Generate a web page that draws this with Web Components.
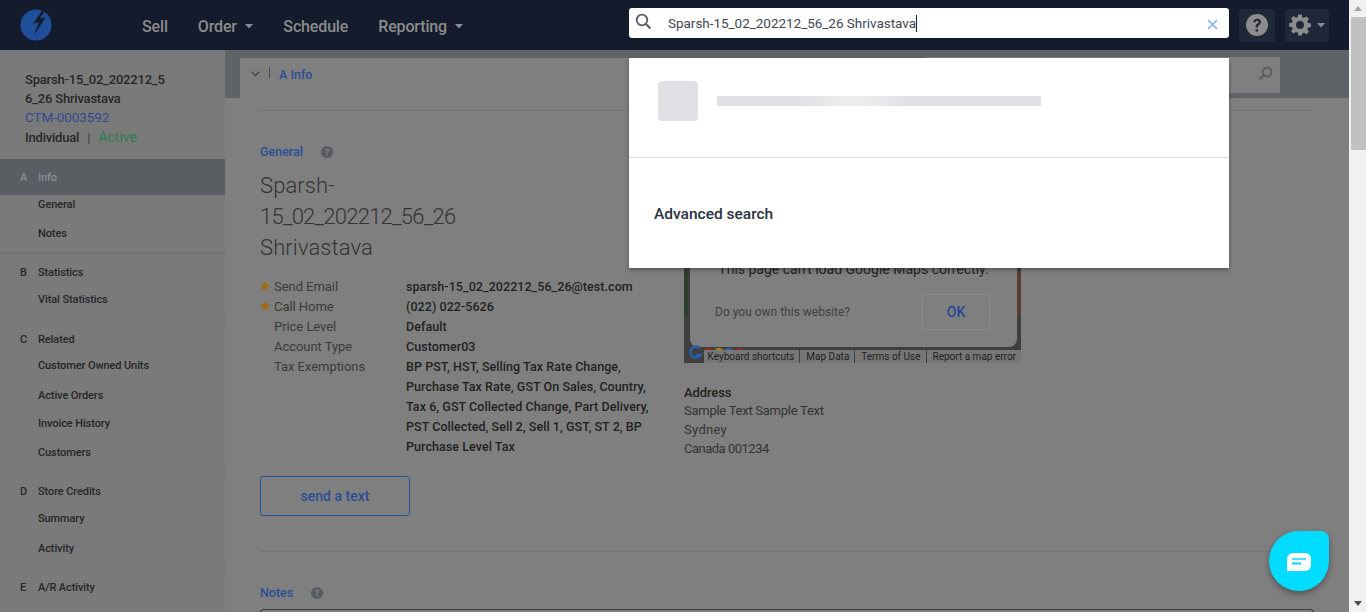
<!DOCTYPE html>
<html lang="en">
<head>
<meta charset="utf-8">
<title>Customer</title>
<style>
  html, body { margin: 0; height: 100%; overflow: hidden; background: #7f7f7f; }
  body { font-family: Roboto, "Liberation Sans", sans-serif; display: flex; }
  .page { flex: none; width: 1349px; height: 612px; display: flex; flex-direction: column; overflow: hidden; position: relative; }
  .body-row { flex: 1; min-height: 0; display: flex; }
</style>
</head>
<body>
<div class="page">
  <app-header></app-header>
  <div class="body-row">
    <side-nav></side-nav>
    <customer-main></customer-main>
  </div>
  <search-panel></search-panel>
  <chat-launcher></chat-launcher>
</div>
<page-scrollbar></page-scrollbar>

<script>
(function () {
  'use strict';

  function define(name, css, html, setup) {
    customElements.define(name, class extends HTMLElement {
      constructor() {
        super();
        const root = this.attachShadow({ mode: 'open' });
        root.innerHTML = '<style>' + css + '</style>' + html;
        if (setup) setup(root, this);
      }
    });
  }

  const caret = '<svg width="8" height="5" viewBox="0 0 8 5"><path d="M0 0h8L4 4.6z" fill="currentColor"/></svg>';

  define('app-header', `
    :host { display: flex; flex: none; height: 50px; background: #131b2c; align-items: center; color: #8c8c8c; }
    .logo { margin-left: 20px; width: 32px; height: 32px; flex: none; overflow: visible; }
    nav { display: flex; margin-left: 90px; padding-top: 3px; font-size: 16px; font-weight: 500; letter-spacing: -.15px; }
    nav span { display: flex; align-items: center; gap: 8px; margin-right: 30px; white-space: nowrap; }
    nav span.drop { margin-right: 30.500px; }
    .tools { margin-left: auto; margin-right: 20px; display: flex; gap: 10px; }
    .tool { height: 33px; background: #1f2839; border-radius: 4px; display: flex; align-items: center; justify-content: center; color: #8c8c8c; }
    .help { width: 36px; }
    .gear { width: 44px; gap: 6px; }
  `, `
    <svg class="logo" viewBox="0 0 32 32">
      <circle cx="16" cy="16" r="15.500" fill="#1f4f9a"/>
      <path d="M24-1 13 14.500l6-1.500-5 13L26 8l-6 1.500L25.500 1z" fill="#131b2c"/>
    </svg>
    <nav>
      <span>Sell</span>
      <span class="drop">Order ${caret}</span>
      <span>Schedule</span>
      <span class="drop">Reporting ${caret}</span>
    </nav>
    <div class="tools">
      <div class="tool help">
        <svg width="24" height="24" viewBox="0 0 24 24"><circle cx="12" cy="12" r="11" fill="#8c8c8c"/><path d="M8.300 9.300C8.500 7 10 5.800 12.200 5.800c2.300 0 3.800 1.300 3.800 3.200 0 1.500-.8 2.300-1.900 3-.9.600-1.200 1-1.200 2v.5h-2.300v-.8c0-1.500.5-2.200 1.600-3 .9-.6 1.400-1 1.400-1.700 0-.8-.6-1.300-1.500-1.300-1 0-1.500.6-1.600 1.600zM10.500 16.200h2.500v2.400h-2.500z" fill="#1f2839"/></svg>
      </div>
      <div class="tool gear">
        <svg width="22" height="22" viewBox="-.5 -.5 25 25"><path fill="#8c8c8c" fill-rule="evenodd" d="M10 0h4l.6 3.300 2 .8L19.400 2.200l2.800 2.800-1.900 2.800.8 2 3.300.6v4l-3.300.6-.8 2 1.900 2.800-2.800 2.800-2.800-1.900-2 .8L14 24h-4l-.6-3.300-2-.8-2.800 1.900-2.800-2.800 1.900-2.800-.8-2L-.4 14v-4l3.300-.6.8-2L1.800 4.600 4.600 1.800l2.800 1.900 2-.8zM12 7.500a4.500 4.500 0 1 0 0 9 4.500 4.500 0 0 0 0-9z"/></svg>
        ${caret}
      </div>
    </div>
  `);

  const sections = [
    ['A', 'Info', ['General', 'Notes']],
    ['B', 'Statistics', ['Vital Statistics']],
    ['C', 'Related', ['Customer Owned Units', 'Active Orders', 'Invoice History', 'Customers']],
    ['D', 'Store Credits', ['Summary', 'Activity']],
    ['E', 'A/R Activity', []]
  ];

  define('side-nav', `
    :host { display: block; flex: none; width: 225px; background: #7a7a7a; color: #262626; font-size: 11px; font-weight: 500; letter-spacing: -.1px; overflow: hidden; }
    .who { height: 109px; box-sizing: border-box; padding: 20px 0 0 25px; font-size: 13px; line-height: 19px; letter-spacing: -.2px; }
    .who .link { color: #32478f; font-weight: 400; font-size: 13.500px; letter-spacing: -.1px; }
    .who .sep { color: #3a3a3a; font-weight: 400; margin: 0 8px; }
    .who .ok { color: #2f7a52; font-weight: 400; font-size: 14px; letter-spacing: .05px; }
    .who .kind { line-height: 21px; }
    section { border-bottom: 2px solid #747474; padding-bottom: 9.500px; }
    section:nth-child(2) { padding-bottom: 10px; }
    .head { display: flex; height: 36px; align-items: center; color: #262626; }
    .head b { padding-left: 20px; flex: none; width: 18px; font-weight: 500; }
    .active .head { background: #5a5e63; color: #8b8e91; }
    .sub { display: block; margin-left: 38px; padding-top: 1px; line-height: 18px; margin-bottom: 9.500px; white-space: nowrap; }
    .sub:last-child { margin-bottom: 0; }
    section:nth-child(3) .sub:first-of-type { margin-top: -1px; margin-bottom: 10.500px; }
    section:nth-child(4) .sub:first-of-type { margin-bottom: 10.500px; }
  `, `
    <div class="who">
      <div>Sparsh-15_02_202212_5<br>6_26 Shrivastava</div>
      <div class="link">CTM-0003592</div>
      <div class="kind">Individual<span class="sep">|</span><span class="ok">Active</span></div>
    </div>
    <div id="list"></div>
  `, function (root) {
    root.getElementById('list').innerHTML = sections.map(function (s, i) {
      return '<section class="' + (i === 0 ? 'active' : '') + '"><div class="head"><b>' + s[0] + '</b>' + s[1] + '</div>' +
        s[2].map(function (t) { return '<span class="sub">' + t + '</span>'; }).join('') + '</section>';
    }).join('');
  });

  const qmark = '<svg width="12" height="12" viewBox="0 0 24 24"><circle cx="12" cy="12" r="12" fill="#555a60"/><path d="M7.800 9.300C8 6.600 9.800 5.200 12.200 5.200c2.600 0 4.300 1.500 4.300 3.600 0 1.700-.9 2.500-2.100 3.300-1 .7-1.300 1.100-1.300 2.200v.5h-2.800v-.8c0-1.600.6-2.500 1.800-3.300 1-.7 1.500-1.100 1.500-1.900 0-.8-.7-1.400-1.700-1.400-1.100 0-1.800.7-1.900 1.900zM10.200 16.500h3v2.800h-3z" fill="#7f7f7f"/></svg>';

  define('section-title', `
    :host { display: flex; align-items: center; gap: 18px; color: #2b4d96; font-size: 12.500px; font-weight: 500; line-height: 16px; }
    svg { display: block; }
  `, '<slot></slot>' + qmark);

  define('detail-row', `
    :host { display: grid; grid-template-columns: 14px 132px 1fr; font-size: 13px; line-height: 20px; color: #3a3a3a; letter-spacing: -.05px; }
    .star { display: block; margin-top: 4px; }
    .v { color: #1f1f1f; font-weight: 500; font-size: 12.500px; letter-spacing: .06px; white-space: nowrap; }
    :host(:not([star])) .star { visibility: hidden; }
  `, '<svg class="star" width="10" height="10" viewBox="0 0 10 10"><path d="M5 .3l1.400 3 3.300.4-2.400 2.200.6 3.300L5 7.600 2.100 9.200l.6-3.300L.3 3.700l3.300-.4z" fill="#a36a0c"/></svg><span class="l"><slot name="label"></slot></span><span class="v"><slot></slot></span>');

  define('map-panel', `
    :host { display: block; position: relative; width: 337px; height: 262px; background: #3f3f3f; overflow: hidden; }
    .edge { position: absolute; top: 170px; width: 4px; height: 45px; }
    .dialog { position: absolute; left: 6px; right: 4px; top: 0; height: 246px; background: #7f7f7f; border-radius: 0 0 8px 8px; color: #1f1f1f; }
    .title { position: absolute; left: 0; right: 0; top: 159px; text-align: center; font: 14px/18px Roboto, sans-serif; white-space: nowrap; }
    .ask { position: absolute; left: 25px; top: 203px; font: 12px/16px Roboto, sans-serif; color: #3f3f3f; }
    .ok { position: absolute; left: 232px; top: 193px; width: 68px; height: 36px; box-sizing: border-box; border: 1px solid #8b8b8b; border-radius: 4px; color: #23479b; font: 500 14px/34px Roboto, sans-serif; text-align: center; }
    .bar { position: absolute; right: 0; bottom: 0; height: 13px; display: flex; background: #777; color: #1f1f1f; font: 10px/14px Roboto, sans-serif; white-space: nowrap; }
    .bar span { padding: 0 5px 0 6px; border-left: 1px solid #3f3f3f; }
    .bar span:first-child { border: 0; padding-left: 4px; }
    .gl { position: absolute; left: 5px; bottom: 2px; }
  `, `
    <div class="edge" style="left:0;background:#2c3f2f"></div>
    <div class="edge" style="right:0;background:#5a3a34"></div>
    <div class="dialog">
      <div class="title">This page can't load Google Maps correctly.</div>
      <div class="ask">Do you own this website?</div>
      <div class="ok">OK</div>
    </div>
    <svg class="gl" width="60" height="16" viewBox="0 0 60 16" fill="none" stroke-width="2.500">
      <path d="M11 3.500A5.500 5.500 0 1 0 11.500 10H7" stroke="#2b5ea8"/>
      <circle cx="20" cy="8" r="4" stroke="#8e2e26"/>
      <circle cx="30" cy="8" r="4" stroke="#a68418"/>
      <circle cx="40" cy="8" r="4" stroke="#2b5ea8"/>
      <circle cx="50" cy="8" r="4" stroke="#8e2e26"/>
    </svg>
    <div class="bar"><span>Keyboard shortcuts</span><span>Map Data</span><span>Terms of Use</span><span>Report a map error</span></div>
  `);

  define('customer-main', `
    :host { display: flex; flex-direction: column; flex: 1; min-width: 0; overflow: hidden; background: #7f7f7f; color: #222; }
    .strip { flex: none; height: 48px; background: #5f6368; display: flex; align-items: flex-start; padding: 0 69px 0 15px; }
    .card { flex: 1; height: 40px; box-sizing: border-box; padding-bottom: 8px; margin-top: 8px; background: #7f7f7f; display: flex; align-items: center; color: #2b4d96; font-size: 12.500px; font-weight: 500; }
    .chev { margin: 0 9px 0 11px; }
    .bar { width: 1px; height: 11px; background: #3c4a66; margin: -3px 9px 0 0; }
    .find { width: 355px; height: 36px; margin-top: 7px; background: #7f7f7f; display: flex; align-items: center; justify-content: flex-end; padding: 0 7px 3px 0; box-sizing: border-box; }
    .content { padding: 12px 35px 0 35px; }
    hr { border: 0; height: 1px; background: #747474; margin: 0; }
    .cols { display: grid; grid-template-columns: 424px 337px; }
    .left { padding-top: 33px; }
    h1 { margin: 10px 0 14px; font-size: 22px; line-height: 31px; font-weight: 300; color: #333; letter-spacing: .1px; }
    h1 .num { letter-spacing: -.75px; }
    .send { width: 150px; height: 40px; box-sizing: border-box; border: 1px solid #23519f; border-radius: 3px; margin-top: 19px; color: #2b4d96; font-size: 14px; font-weight: 500; line-height: 38px; text-align: center; }
    .addr { margin-top: 21px; font-size: 13px; line-height: 19px; color: #333; letter-spacing: -.26px; }
    .addr b { display: block; font-weight: 500; color: #222; line-height: 17px; letter-spacing: -.1px; }
    .addr .city { letter-spacing: .3px; }
    .addr .zip { letter-spacing: -.5px; }
    .rule2 { margin: 35px 0 33px; }
    .notes { margin-top: 8px; height: 40px; border: 1px solid #3c3c3c; border-bottom: 0; border-radius: 4px 4px 0 0; }
  `, `
    <div class="strip">
      <div class="card">
        <svg class="chev" width="9" height="6" viewBox="0 0 9 6"><path d="M.7.7 4.500 4.700 8.300.7" fill="none" stroke="#2f3a4e" stroke-width="1.200"/></svg>
        <span class="bar"></span>A Info
      </div>
      <div class="find">
        <svg width="15" height="15" viewBox="0 0 15 15"><circle cx="9" cy="6" r="4.300" fill="none" stroke="#5c5f63" stroke-width="2.200"/><path d="M6 9 1.800 13.200" stroke="#5c5f63" stroke-width="2.600"/></svg>
      </div>
    </div>
    <div class="content">
      <hr>
      <div class="cols">
        <div class="left">
          <section-title>General</section-title>
          <h1>Sparsh-<br><span class="num">15_02_202212_56_26</span><br>Shrivastava</h1>
          <detail-row star><span slot="label">Send Email</span>sparsh-15_02_202212_56_26@test.com</detail-row>
          <detail-row star><span slot="label">Call Home</span>(022) 022-5626</detail-row>
          <detail-row><span slot="label">Price Level</span>Default</detail-row>
          <detail-row><span slot="label">Account Type</span>Customer03</detail-row>
          <detail-row><span slot="label">Tax Exemptions</span>BP PST, HST, Selling Tax Rate Change,<br>Purchase Tax Rate, GST On Sales, Country,<br>Tax 6, GST Collected Change, Part Delivery,<br>PST Collected, Sell 2, Sell 1, GST, ST 2, BP<br>Purchase Level Tax</detail-row>
          <div class="send">send a text</div>
        </div>
        <div>
          <map-panel style="margin-top:-10px"></map-panel>
          <div class="addr"><b>Address</b>Sample Text Sample Text<br><span class="city">Sydney</span><br><span class="zip">Canada 001234</span></div>
        </div>
      </div>
      <hr class="rule2">
      <section-title>Notes</section-title>
      <div class="notes"></div>
    </div>
  `);

  define('search-panel', `
    :host { display: block; position: absolute; left: 629px; top: 8px; width: 600px; color: #2a3142; }
    .input { height: 30px; background: #fff; border-radius: 3px; display: flex; align-items: center; position: relative; }
    .icon { position: absolute; left: 6px; top: 5px; }
    .q { margin-left: 39px; font-size: 13.500px; color: #3f4656; white-space: nowrap; letter-spacing: -.03px; display: flex; align-items: center; }
    .cursor { display: inline-block; width: 1px; height: 17px; background: #1a2233; }
    .x { position: absolute; right: 11px; top: 11px; }
    .drop { margin-top: 20px; height: 210px; background: #fff; box-shadow: 0 2px 4px rgba(0,0,0,.35); display: flex; flex-direction: column; }
    .skel { height: 100px; box-sizing: border-box; border-bottom: 1px solid #dedfe2; display: flex; align-items: center; padding: 0 0 1px 29px; gap: 19px; }
    .sq { width: 40px; height: 40px; border-radius: 4px; background: #e0e1e5; margin-top: -13px; }
    .ln { width: 324px; height: 10px; background: linear-gradient(90deg, #e0e1e5 0 25%, #eeeeef 42%, #e0e1e5 60%); margin-top: -13px; }
    .adv { margin: 47px 0 0 25px; font-size: 15.500px; line-height: 18px; font-weight: 500; }
  `, `
    <div class="input">
      <svg class="icon" width="17" height="17" viewBox="0 0 17 17"><circle cx="7" cy="7" r="5.300" fill="none" stroke="#5b5f6a" stroke-width="1.800"/><path d="M11 11l4.500 4.500" stroke="#5b5f6a" stroke-width="2.200"/></svg>
      <div class="q">Sparsh-15_02_202212_56_26 Shrivastava<span class="cursor"></span></div>
      <svg class="x" width="11" height="11" viewBox="0 0 11 11"><path d="M1 1l9 9M10 1l-9 9" stroke="#7eb3f0" stroke-width="1.600"/></svg>
    </div>
    <div class="drop">
      <div class="skel"><div class="sq"></div><div class="ln"></div></div>
      <div class="adv">Advanced search</div>
    </div>
  `);

  define('chat-launcher', `
    :host { display: flex; position: absolute; left: 1269px; top: 531px; width: 60px; height: 60px; background: #00dcff; border-radius: 50% 8px 50% 50%; box-shadow: 0 3px 6px rgba(0,0,0,.35); align-items: center; justify-content: center; }
    svg { display: block; margin-top: 2px; }
  `, `
    <svg width="24" height="18" viewBox="0 0 24 18"><path d="M6 0h12a6 6 0 0 1 6 6v6a6 6 0 0 1-6 6H0V6a6 6 0 0 1 6-6z" fill="#fff"/><path d="M5 6h14" stroke="#00dcff" stroke-width="1.500"/><path d="M5 10.500h9" stroke="#00dcff" stroke-width="2"/></svg>
  `);

  define('page-scrollbar', `
    :host { display: flex; flex-direction: column; flex: none; width: 17px; height: 612px; background: #f1f1f1; align-items: center; }
    .btn { flex: none; height: 17px; display: flex; align-items: center; justify-content: center; }
    .thumb { flex: none; width: 15px; margin-left: 2px; height: 133px; background: #c1c1c1; }
    .fill { flex: 1; }
  `, `
    <div class="btn"><svg width="8" height="5" viewBox="0 0 8 5"><path d="M4 0l4 5H0z" fill="#a3a3a3"/></svg></div>
    <div class="thumb"></div>
    <div class="fill"></div>
    <div class="btn"><svg width="8" height="5" viewBox="0 0 8 5"><path d="M4 5 0 0h8z" fill="#505050"/></svg></div>
  `);
})();
</script>
</body>
</html>
